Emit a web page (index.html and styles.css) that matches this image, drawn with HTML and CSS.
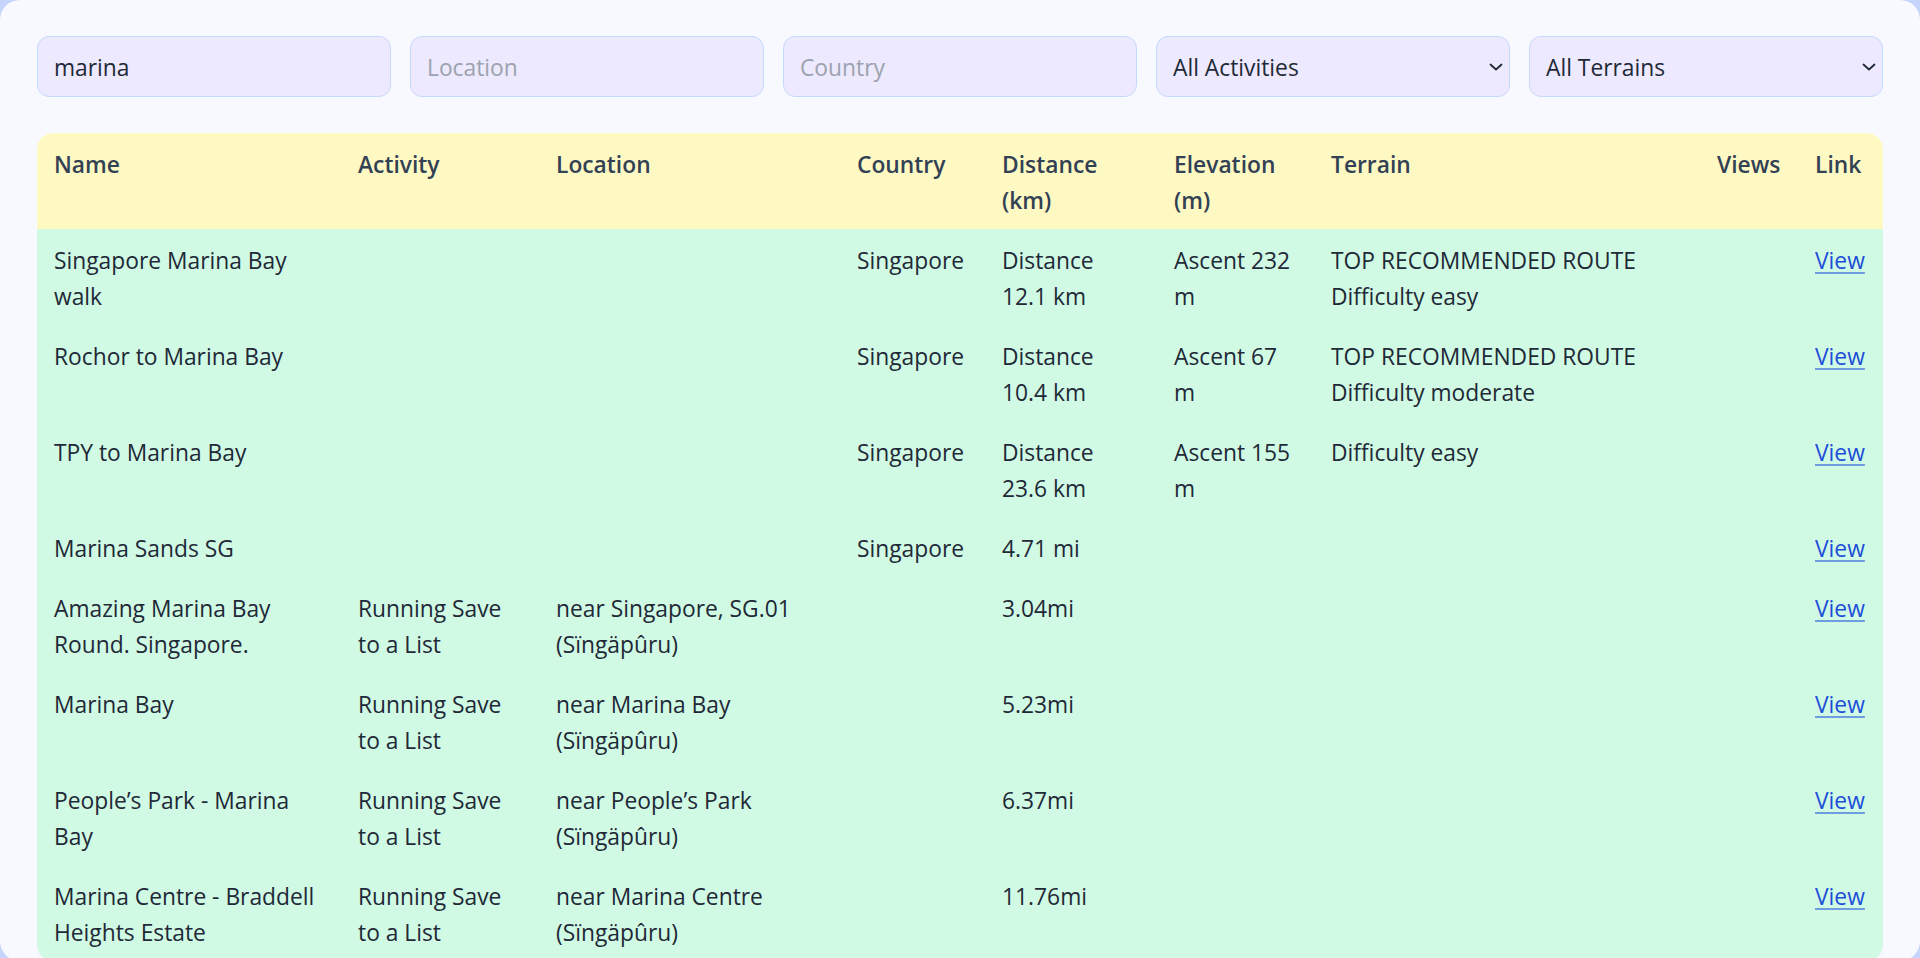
FILE: index.html
```html
<!DOCTYPE html>
<html lang="en">
<head>
<meta charset="utf-8">
<title>Routes</title>
<link rel="stylesheet" href="styles.css">
</head>
<body>
<div class="card">
  <div class="filters">
    <input class="field" type="text" value="marina">
    <input class="field" type="text" placeholder="Location">
    <input class="field" type="text" placeholder="Country">
    <div class="select-wrap">
      <select class="field select"><option>All Activities</option></select>
      <svg class="chevron" viewBox="0 0 14 8" width="14" height="8"><path d="M1.5 1.5 L7 6.5 L12.5 1.5" fill="none" stroke="#1f2937" stroke-width="1.8" stroke-linecap="round" stroke-linejoin="round"/></svg>
    </div>
    <div class="select-wrap">
      <select class="field select"><option>All Terrains</option></select>
      <svg class="chevron" viewBox="0 0 14 8" width="14" height="8"><path d="M1.5 1.5 L7 6.5 L12.5 1.5" fill="none" stroke="#1f2937" stroke-width="1.8" stroke-linecap="round" stroke-linejoin="round"/></svg>
    </div>
  </div>

  <div class="table-wrap">
    <table class="routes">
      <colgroup>
        <col class="c-name"><col class="c-activity"><col class="c-location"><col class="c-country"><col class="c-distance"><col class="c-elevation"><col class="c-terrain"><col class="c-views"><col class="c-link">
      </colgroup>
      <thead>
        <tr>
          <th>Name</th><th>Activity</th><th>Location</th><th>Country</th><th>Distance (km)</th><th>Elevation (m)</th><th>Terrain</th><th>Views</th><th>Link</th>
        </tr>
      </thead>
      <tbody>
        <tr><td>Singapore Marina Bay walk</td><td></td><td></td><td>Singapore</td><td>Distance 12.1 km</td><td>Ascent 232 m</td><td>TOP RECOMMENDED ROUTE Difficulty easy</td><td></td><td><a href="#">View</a></td></tr>
        <tr><td>Rochor to Marina Bay</td><td></td><td></td><td>Singapore</td><td>Distance 10.4 km</td><td>Ascent 67 m</td><td>TOP RECOMMENDED ROUTE Difficulty moderate</td><td></td><td><a href="#">View</a></td></tr>
        <tr><td>TPY to Marina Bay</td><td></td><td></td><td>Singapore</td><td>Distance 23.6 km</td><td>Ascent 155 m</td><td>Difficulty easy</td><td></td><td><a href="#">View</a></td></tr>
        <tr><td>Marina Sands SG</td><td></td><td></td><td>Singapore</td><td>4.71 mi</td><td></td><td></td><td></td><td><a href="#">View</a></td></tr>
        <tr><td>Amazing Marina Bay Round. Singapore.</td><td>Running Save to a List</td><td>near Singapore, SG.01 (Sïngäpûru)</td><td></td><td>3.04mi</td><td></td><td></td><td></td><td><a href="#">View</a></td></tr>
        <tr><td>Marina Bay</td><td>Running Save to a List</td><td>near Marina Bay (Sïngäpûru)</td><td></td><td>5.23mi</td><td></td><td></td><td></td><td><a href="#">View</a></td></tr>
        <tr><td>People’s Park - Marina Bay</td><td>Running Save to a List</td><td>near People’s Park (Sïngäpûru)</td><td></td><td>6.37mi</td><td></td><td></td><td></td><td><a href="#">View</a></td></tr>
        <tr><td>Marina Centre - Braddell Heights Estate</td><td>Running Save to a List</td><td>near Marina Centre (Sïngäpûru)</td><td></td><td>11.76mi</td><td></td><td></td><td></td><td><a href="#">View</a></td></tr>
      </tbody>
    </table>
  </div>
</div>
</body>
</html>
```

FILE: styles.css
```css
html, body {
  margin: 0;
  padding: 0;
}

body {
  background: #c6d4fb;
  font-family: "Open Sans", "Noto Sans", sans-serif;
  font-size: 22.8px;
  color: #1f2937;
  overflow: hidden;
}

.card {
  background: #f8f9ff;
  border-radius: 20px;
  min-height: 100vh;
  box-sizing: border-box;
  padding: 36px 37px 0 37px;
}

.filters {
  display: grid;
  grid-template-columns: repeat(5, 1fr);
  gap: 19px;
}

.field {
  box-sizing: border-box;
  width: 100%;
  height: 61px;
  margin: 0;
  padding: 2px 16px 0 16px;
  background: #ede9fe;
  border: 1px solid #c4dafc;
  border-radius: 12px;
  font-family: inherit;
  font-size: 22.8px;
  color: #1f2937;
  outline: none;
}

.field::placeholder {
  color: #9ca3af;
}

.select-wrap {
  position: relative;
}

.select {
  appearance: none;
  -webkit-appearance: none;
}

.chevron {
  position: absolute;
  right: 7px;
  top: 27px;
  pointer-events: none;
}

.table-wrap {
  margin-top: 36px;
  border-radius: 16px;
  overflow: hidden;
}

.routes {
  width: 100%;
  table-layout: fixed;
  border-collapse: collapse;
}

.c-name { width: 304px; }
.c-activity { width: 198px; }
.c-location { width: 301px; }
.c-country { width: 145px; }
.c-distance { width: 172px; }
.c-elevation { width: 157px; }
.c-terrain { width: 386px; }
.c-views { width: 98px; }
.c-link { width: 85px; }

.routes th,
.routes td {
  padding: 14px 17px 10px 17px;
  line-height: 36px;
  text-align: left;
  vertical-align: top;
}

.routes thead tr {
  background: #fef9c3;
}

.routes th {
  font-weight: 600;
  color: #334155;
}

.routes tbody tr {
  background: #d1fae5;
}

.routes td {
  color: #1f2937;
}

.routes a {
  color: #1d4ed8;
  text-decoration: underline;
  text-decoration-color: rgba(29, 78, 216, 0.55);
  text-decoration-thickness: 2px;
  text-underline-offset: 3px;
}
```
